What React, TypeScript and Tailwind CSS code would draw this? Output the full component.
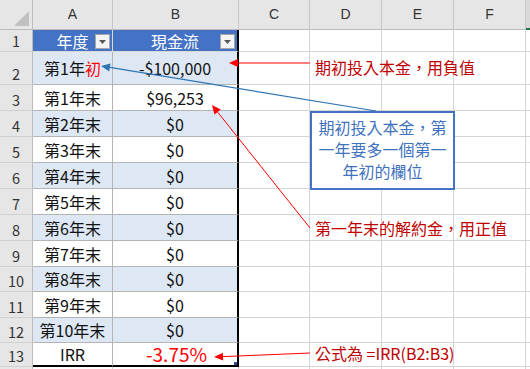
import React from "react";

type Row = {
  n: number;
  h: string;
  a: React.ReactNode;
  b: React.ReactNode;
  band: boolean;
};

const COLS = "grid grid-cols-[33px_80px_126px_71px_72px_72px_72px_1fr]";

const rows: Row[] = [
  {
    n: 2,
    h: "h-[33px]",
    a: (
      <>
        第1年<span className="text-[#ff0000]">初</span>
      </>
    ),
    b: "-$100,000",
    band: true,
  },
  { n: 3, h: "h-[26px]", a: "第1年末", b: "$96,253", band: false },
];
for (let n = 4; n <= 12; n++) {
  rows.push({
    n,
    h: n === 10 || n === 12 ? "h-[25px]" : "h-[26px]",
    a: `第${n - 2}年末`,
    b: "$0",
    band: n % 2 === 0,
  });
}

function Drop() {
  return (
    <span className="absolute right-[2px] top-[4px] flex h-[15px] w-[15px] items-center justify-center border border-[#a6a6a6] bg-[#f4f4f4]">
      <svg width="7" height="4" viewBox="0 0 7 4">
        <path d="M0 0h7L3.5 4z" fill="#595959" />
      </svg>
    </span>
  );
}

function RowNum({ n }: { n: number }) {
  return (
    <div className="flex items-end justify-center border-r border-b border-r-[#bcbcbc] border-b-[#d0d0d0] bg-[#e6e6e6] pb-[2px] text-[14.5px] leading-[16px] text-[#333]">
      {n}
    </div>
  );
}

function Blank() {
  return <div className="border-r border-b border-[#d4d4d4]" />;
}

function Arrow({ x1, y1, x2, y2, color, w = 1 }: { x1: number; y1: number; x2: number; y2: number; color: string; w?: number }) {
  // tail (x1,y1) -> tip (x2,y2)
  const dx = x2 - x1;
  const dy = y2 - y1;
  const len = Math.hypot(dx, dy);
  const ux = dx / len;
  const uy = dy / len;
  const bx = x2 - ux * 9;
  const by = y2 - uy * 9;
  const px = -uy * 4;
  const py = ux * 4;
  return (
    <g>
      <line x1={x1} y1={y1} x2={bx} y2={by} stroke={color} strokeWidth={w} />
      <polygon points={`${x2},${y2} ${bx + px},${by + py} ${bx - px},${by - py}`} fill={color} />
    </g>
  );
}

export default function App() {
  return (
    <div className="relative h-[369px] w-[530px] overflow-hidden bg-white font-['Noto_Sans_CJK_TC',sans-serif]">
      {/* column letters */}
      <div className={`${COLS} h-[30px] bg-[#e6e6e6] font-['Liberation_Sans',sans-serif] text-[14px] text-[#333]`}>
        <div className="relative border-r border-b border-[#bcbcbc]">
          <svg className="absolute right-[3px] bottom-[3px]" width="15" height="15" viewBox="0 0 15 15">
            <path d="M15 0V15H0z" fill="#c0c0c0" />
          </svg>
        </div>
        {["A", "B", "C", "D", "E", "F"].map((c) => (
          <div key={c} className="flex items-center justify-center border-r border-b border-r-[#c6c6c6] border-b-[#bcbcbc]">
            {c}
          </div>
        ))}
        <div className="border-b-2 border-b-[#217346] bg-[#d9d9d9]" />
      </div>

      {/* row 1: table header */}
      <div className={`${COLS} h-[22px]`}>
        <RowNum n={1} />
        <div className="relative flex items-center justify-center border-r border-b border-r-[#d9d9d9] border-b-[#d9d9d9] bg-[#4472c4] text-[16px] leading-[20px] text-white">
          年度
          <Drop />
        </div>
        <div className="relative flex items-center justify-center border-r-2 border-b border-r-black border-b-[#d9d9d9] bg-[#4472c4] text-[16px] leading-[20px] text-white">
          現金流
          <Drop />
        </div>
        <Blank />
        <Blank />
        <Blank />
        <Blank />
        <div className="border-b border-[#d4d4d4]" />
      </div>

      {rows.map((r) => (
        <div key={r.n} className={`${COLS} ${r.h}`}>
          <RowNum n={r.n} />
          <div
            className={`flex items-center justify-center border-r border-b border-[#b4b4b4] text-[16px] leading-[20px] text-[#111] ${
              r.band ? "bg-[#dde8f4]" : "bg-white"
            }`}
          >
            {r.a}
          </div>
          <div
            className={`flex items-center justify-center border-r-2 border-b border-r-black border-b-[#b4b4b4] text-[16px] leading-[20px] text-[#111] ${
              r.band ? "bg-[#dde8f4]" : "bg-white"
            }`}
          >
            {r.b}
          </div>
          <Blank />
          <Blank />
          <Blank />
          <Blank />
          <div className="border-b border-[#d4d4d4]" />
        </div>
      ))}

      {/* row 13: IRR */}
      <div className={`${COLS} h-[24px]`}>
        <RowNum n={13} />
        <div className="flex items-center justify-center border-r border-b-2 border-r-[#b4b4b4] border-b-black text-[16px] leading-[20px] text-[#111]">
          IRR
        </div>
        <div className="relative flex items-center justify-center border-r-2 border-b-2 border-black pl-[3px] text-[19px] leading-[20px] text-[#ff0000]">
          -3.75%
          <span className="absolute right-0 bottom-0 h-[3px] w-[3px] bg-[#2f528f]" />
        </div>
        <Blank />
        <Blank />
        <Blank />
        <Blank />
        <div className="border-b border-[#d4d4d4]" />
      </div>

      <div className={`${COLS} h-[10px]`}>
        <div className="border-r border-[#bcbcbc] bg-[#e6e6e6]" />
        <div className="border-r border-[#d4d4d4]" />
        <div className="border-r border-[#d4d4d4]" />
        <div className="border-r border-[#d4d4d4]" />
        <div className="border-r border-[#d4d4d4]" />
        <div className="border-r border-[#d4d4d4]" />
        <div className="border-r border-[#d4d4d4]" />
        <div />
      </div>

      {/* annotation arrows */}
      <svg className="pointer-events-none absolute left-0 top-0" width="530" height="369" viewBox="0 0 530 369">
        <Arrow x1={376} y1={111} x2={101} y2={66} color="#2e75b6" w={1.2} />
        <Arrow x1={310} y1={63} x2={229} y2={63} color="#ff0000" />
        <Arrow x1={310} y1={228} x2={212} y2={105} color="#ff0000" />
        <Arrow x1={310} y1={353} x2={214} y2={357} color="#ff0000" />
      </svg>

      <div className="absolute left-[315px] top-[56px] whitespace-nowrap text-[16px] leading-[22px] text-[#c00000]">
        期初投入本金，用負值
      </div>
      <div className="absolute left-[315px] top-[217px] whitespace-nowrap text-[16px] leading-[22px] text-[#c00000]">
        第一年末的解約金，用正值
      </div>
      <div className="absolute left-[315px] top-[342px] whitespace-nowrap text-[16px] leading-[22px] text-[#c00000]">
        公式為 =IRR(B2:B3)
      </div>

      <div className="absolute left-[310px] top-[111px] flex h-[79px] w-[145px] flex-col items-center border-2 border-[#4472c4] bg-white pt-[3px] text-[16px] leading-[22px] text-[#3f72bf]">
        <div>期初投入本金，第</div>
        <div>一年要多一個第一</div>
        <div>年初的欄位</div>
      </div>
    </div>
  );
}
